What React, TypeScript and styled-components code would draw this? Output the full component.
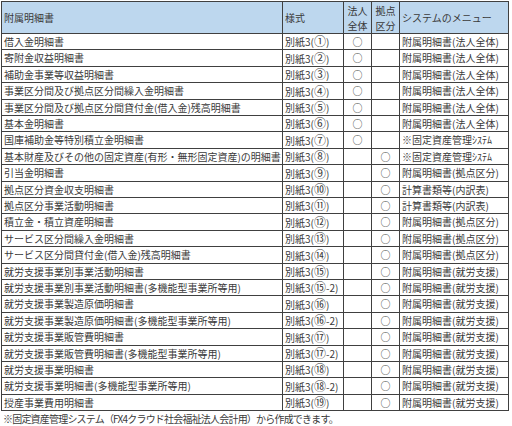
import React from "react";
import styled, { createGlobalStyle } from "styled-components";

const Global = createGlobalStyle`
  html, body { margin: 0; padding: 0; background: #fff; }
  body {
    font-family: "Noto Sans CJK JP", "Noto Sans", sans-serif;
    color: #333;
  }
`;

const Page = styled.div`
  width: 512px;
  height: 426px;
  padding: 1px 0 0 1px;
  box-sizing: border-box;
  overflow: hidden;
`;

const Table = styled.table`
  border-collapse: collapse;
  table-layout: fixed;
  width: 507px;
  font-size: 10px;
  color: #3a3a3a;
`;

const HeadCell = styled.th<{ $center?: boolean }>`
  background: #bdd7ee;
  border: 1px solid #404040;
  height: 31px;
  padding: 0 0 0 ${(p) => (p.$center ? "0" : "2px")};
  text-align: ${(p) => (p.$center ? "center" : "left")};
  font-weight: 400;
  line-height: 15px;
  vertical-align: middle;
  white-space: nowrap;
  overflow: hidden;
`;

const Row = styled.tr``;

const Cell = styled.td<{ $center?: boolean }>`
  border: 1px solid #404040;
  padding: 0 0 0 ${(p) => (p.$center ? "0" : "2px")};
  text-align: ${(p) => (p.$center ? "center" : "left")};
  line-height: 12px;
  white-space: nowrap;
  overflow: hidden;
  vertical-align: middle;
`;

const Mark = styled.span`
  font-size: 10px;
`;

const Circ = styled.span`
  font-size: 12px;
  line-height: 12px;
`;

const Note = styled.p`
  margin: 2px 0 0 2px;
  font-size: 10px;
  line-height: 12px;
  letter-spacing: -0.8px;
  color: #3a3a3a;
  white-space: nowrap;
`;

type Item = { name: string; form: string; sub?: string; col: "hojin" | "kyoten"; menu: string };

const M1 = "附属明細書(法人全体)";
const M2 = "※固定資産管理ｼｽﾃﾑ";
const M3 = "附属明細書(拠点区分)";
const M4 = "計算書類等(内訳表)";
const M5 = "附属明細書(就労支援)";

const items: Item[] = [
  { name: "借入金明細書", form: "①", col: "hojin", menu: M1 },
  { name: "寄附金収益明細書", form: "②", col: "hojin", menu: M1 },
  { name: "補助金事業等収益明細書", form: "③", col: "hojin", menu: M1 },
  { name: "事業区分間及び拠点区分間繰入金明細書", form: "④", col: "hojin", menu: M1 },
  { name: "事業区分間及び拠点区分間貸付金(借入金)残高明細書", form: "⑤", col: "hojin", menu: M1 },
  { name: "基本金明細書", form: "⑥", col: "hojin", menu: M1 },
  { name: "国庫補助金等特別積立金明細書", form: "⑦", col: "hojin", menu: M2 },
  { name: "基本財産及びその他の固定資産(有形・無形固定資産)の明細書", form: "⑧", col: "kyoten", menu: M2 },
  { name: "引当金明細書", form: "⑨", col: "kyoten", menu: M3 },
  { name: "拠点区分資金収支明細書", form: "⑩", col: "kyoten", menu: M4 },
  { name: "拠点区分事業活動明細書", form: "⑪", col: "kyoten", menu: M4 },
  { name: "積立金・積立資産明細書", form: "⑫", col: "kyoten", menu: M3 },
  { name: "サービス区分間繰入金明細書", form: "⑬", col: "kyoten", menu: M3 },
  { name: "サービス区分間貸付金(借入金)残高明細書", form: "⑭", col: "kyoten", menu: M3 },
  { name: "就労支援事業別事業活動明細書", form: "⑮", col: "kyoten", menu: M5 },
  { name: "就労支援事業別事業活動明細書(多機能型事業所等用)", form: "⑮", sub: "-2", col: "kyoten", menu: M5 },
  { name: "就労支援事業製造原価明細書", form: "⑯", col: "kyoten", menu: M5 },
  { name: "就労支援事業製造原価明細書(多機能型事業所等用)", form: "⑯", sub: "-2", col: "kyoten", menu: M5 },
  { name: "就労支援事業販管費明細書", form: "⑰", col: "kyoten", menu: M5 },
  { name: "就労支援事業販管費明細書(多機能型事業所等用)", form: "⑰", sub: "-2", col: "kyoten", menu: M5 },
  { name: "就労支援事業明細書", form: "⑱", col: "kyoten", menu: M5 },
  { name: "就労支援事業明細書(多機能型事業所等用)", form: "⑱", sub: "-2", col: "kyoten", menu: M5 },
  { name: "授産事業費用明細書", form: "⑲", col: "kyoten", menu: M5 },
];

const ROW = 16.4;

export default function App() {
  return (
    <Page>
      <Global />
      <Table>
        <colgroup>
          <col style={{ width: 281 }} />
          <col style={{ width: 61 }} />
          <col style={{ width: 28 }} />
          <col style={{ width: 28 }} />
          <col style={{ width: 109 }} />
        </colgroup>
        <thead>
          <tr>
            <HeadCell>附属明細書</HeadCell>
            <HeadCell>様式</HeadCell>
            <HeadCell $center>
              法人
              <br />
              全体
            </HeadCell>
            <HeadCell $center>
              拠点
              <br />
              区分
            </HeadCell>
            <HeadCell>システムのメニュー</HeadCell>
          </tr>
        </thead>
        <tbody>
          {items.map((it, i) => {
            const h = Math.round((i + 1) * ROW) - Math.round(i * ROW);
            return (
              <Row key={i} style={{ height: h }}>
                <Cell>{it.name}</Cell>
                <Cell>
                  別紙3(<Circ>{it.form}</Circ>
                  {it.sub ?? ""})
                </Cell>
                <Cell $center>{it.col === "hojin" ? <Mark>○</Mark> : null}</Cell>
                <Cell $center>{it.col === "kyoten" ? <Mark>○</Mark> : null}</Cell>
                <Cell>{it.menu}</Cell>
              </Row>
            );
          })}
        </tbody>
      </Table>
      <Note>※固定資産管理システム（FX4クラウド社会福祉法人会計用）から作成できます。</Note>
    </Page>
  );
}
